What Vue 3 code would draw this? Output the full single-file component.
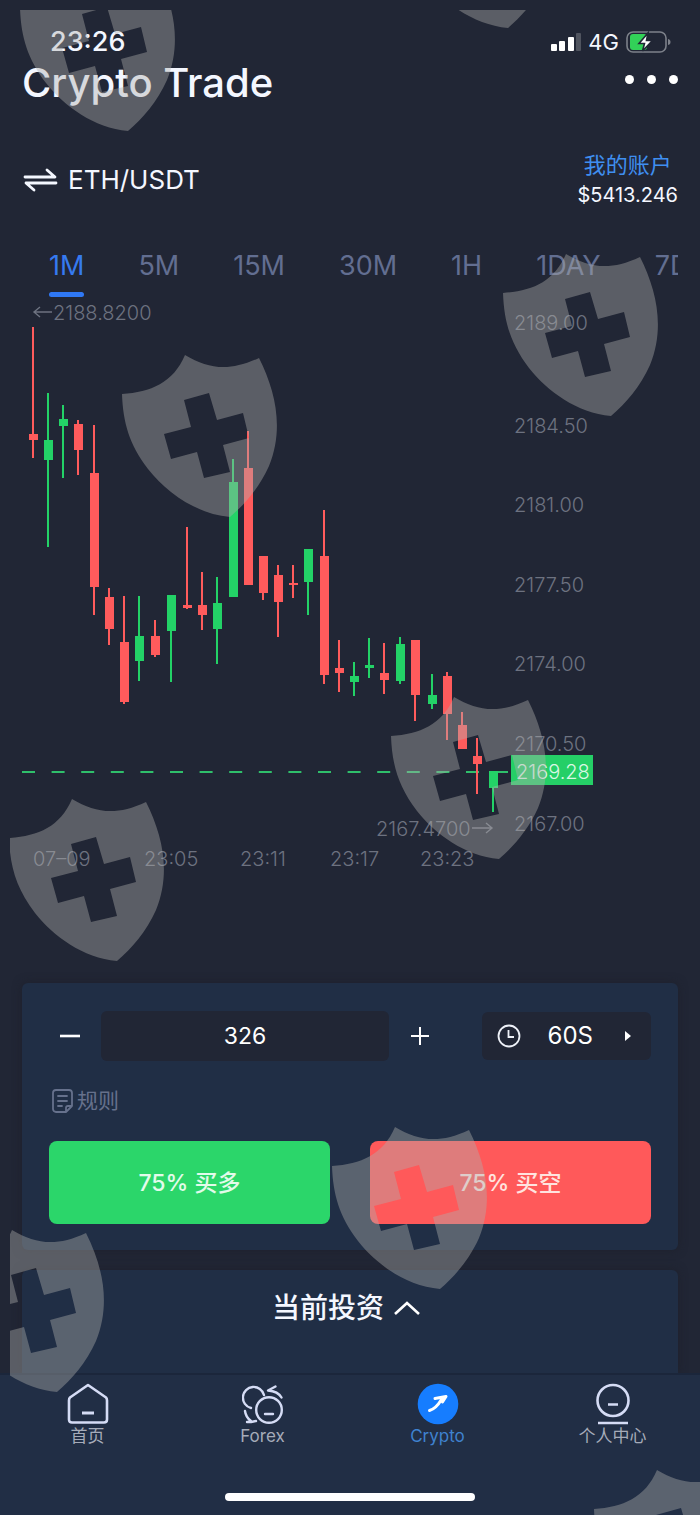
<script setup>
import { ref } from 'vue'

const periods = ['1M', '5M', '15M', '30M', '1H', '1DAY', '7DAY']
const period = ref('1M')
const amount = ref(326)
const duration = ref('60S')

// x, high, body top, body bottom, low, direction
const candles = [
  [33, 327, 434, 440, 458, 'down'],
  [48, 393, 440, 460, 547, 'up'],
  [63, 405, 419, 426, 478, 'up'],
  [78, 420, 424, 450, 475, 'down'],
  [94, 425, 473, 587, 615, 'down'],
  [109, 588, 597, 629, 645, 'down'],
  [124, 596, 642, 702, 704, 'down'],
  [139, 596, 636, 661, 681, 'up'],
  [155, 620, 636, 655, 657, 'down'],
  [171, 595, 595, 631, 682, 'up'],
  [187, 527, 605, 608, 609, 'down'],
  [202, 572, 605, 615, 630, 'down'],
  [217, 577, 603, 629, 664, 'up'],
  [233, 459, 482, 597, 597, 'up'],
  [248, 431, 468, 585, 585, 'down'],
  [263, 556, 556, 593, 600, 'down'],
  [278, 565, 575, 602, 637, 'down'],
  [293, 565, 583, 585, 598, 'down'],
  [308, 549, 549, 582, 615, 'up'],
  [324, 510, 556, 675, 684, 'down'],
  [339, 640, 668, 673, 692, 'down'],
  [354, 662, 676, 682, 696, 'up'],
  [369, 638, 665, 668, 678, 'up'],
  [384, 643, 673, 680, 694, 'down'],
  [400, 637, 644, 681, 684, 'up'],
  [415, 640, 640, 695, 721, 'down'],
  [432, 674, 695, 704, 709, 'up'],
  [447, 672, 676, 714, 740, 'down'],
  [462, 712, 725, 749, 749, 'down'],
  [477, 738, 756, 764, 794, 'down'],
  [493, 771, 771, 788, 812, 'up'],
]
const prices = [
  ['2189.00', 330], ['2184.50', 433], ['2181.00', 512], ['2177.50', 592],
  ['2174.00', 671], ['2170.50', 751], ['2167.00', 831],
]
const times = [
  ['07–09', 33], ['23:05', 144], ['23:11', 240], ['23:17', 330], ['23:23', 420],
]
const shields = [
  [19, -32], [399, -135], [502, 253], [121, 354], [390, 696],
  [8, 798], [331, 1126], [-52, 1229], [593, 1469],
]
</script>

<template>
  <div class="page">
    <div class="status">
      <span class="clock">23:26</span>
      <span class="signals">
        <svg width="30" height="18" viewBox="0 0 30 18" aria-hidden="true">
          <rect x="0" y="11" width="6" height="7" rx="1" fill="#fff" />
          <rect x="8" y="8" width="6" height="10" rx="1" fill="#fff" />
          <rect x="17" y="4" width="6" height="14" rx="1" fill="#fff" />
          <rect x="25" y="0" width="5" height="18" rx="1" fill="#50545f" />
        </svg>
        <span class="net">4G</span>
        <svg width="46" height="24" viewBox="0 0 46 24" aria-hidden="true">
          <rect x="1" y="2" width="39" height="20" rx="6" fill="none" stroke="#7d818a" stroke-width="1.6" />
          <rect x="4" y="4" width="17" height="16" rx="3" fill="#32d158" />
          <path d="M42 9c2 .5 2.500 1.500 2.500 3s-.5 2.500-2.500 3z" fill="#7d818a" />
          <path d="M22 3 13 13.500h5.500L16.500 21 26.500 10.500h-6z" fill="#fff" stroke="#212635" stroke-width="1.600" />
        </svg>
      </span>
    </div>

    <header class="top">
      <h1>Crypto Trade</h1>
      <button class="more" type="button" aria-label="More"><i></i><i></i><i></i></button>
    </header>

    <section class="pair-row">
      <button class="pair" type="button">
        <svg width="36" height="26" viewBox="0 0 36 26" fill="none" stroke="#f4f7ff" stroke-width="2.800" stroke-linecap="round" stroke-linejoin="round" aria-hidden="true">
          <path d="M3 10h30L25 3M34 16H4l8 7" />
        </svg>
        <span>ETH/USDT</span>
      </button>
      <div class="account">
        <a href="#account">我的账户</a>
        <span>$5413.246</span>
      </div>
    </section>

    <nav class="periods">
      <button
        v-for="p in periods" :key="p" type="button"
        :class="{ on: p === period }" @click="period = p"
      >{{ p }}</button>
    </nav>

    <svg class="chart" viewBox="22 298 656 582" role="img" aria-label="ETH/USDT">
      <line x1="22" y1="772" x2="508" y2="772" class="last-line" />
      <g v-for="c in candles" :key="c[0]" :class="c[5]">
        <rect :x="c[0] - 1" :y="c[1]" width="2" :height="c[4] - c[1]" />
        <rect :x="c[0] - 4" :y="c[2]" width="9" :height="c[3] - c[2]" />
      </g>
      <text v-for="p in prices" :key="p[0]" x="514" :y="p[1]">{{ p[0] }}</text>
      <text v-for="t in times" :key="t[0]" :x="t[1]" y="866">{{ t[0] }}</text>
      <text x="53" y="320">2188.8200</text>
      <text x="376" y="836">2167.4700</text>
      <path class="arrow" d="M40 307l-6 5 6 5M34 312h18M486 823l6 5-6 5M492 828h-20" />
      <rect x="511" y="755" width="82" height="30" class="tag" />
      <text x="516" y="779" class="tag-text">2169.28</text>
    </svg>

    <section class="card order">
      <div class="controls">
        <button class="step" type="button" aria-label="Decrease" @click="amount--">
          <svg width="20" height="20" viewBox="0 0 20 20"><path d="M0 10h20" stroke="#fff" stroke-width="2.600" /></svg>
        </button>
        <input v-model="amount" class="amount" type="text" inputmode="numeric" aria-label="Amount" />
        <button class="step plus" type="button" aria-label="Increase" @click="amount++">
          <svg width="20" height="20" viewBox="0 0 20 20"><path d="M1 10h18M10 1v18" stroke="#fff" stroke-width="2" /></svg>
        </button>
        <label class="duration">
          <svg width="24" height="24" viewBox="0 0 24 24" fill="none" stroke="#eef1f8" stroke-width="1.800" aria-hidden="true">
            <circle cx="12" cy="12" r="10.500" /><path d="M11.500 6v7H17" />
          </svg>
          <select v-model="duration" aria-label="Duration"><option>60S</option></select>
          <svg width="8" height="12" viewBox="0 0 8 12" aria-hidden="true"><path d="M1 1v10l6-5z" fill="#fff" /></svg>
        </label>
      </div>

      <a class="rules" href="#rules">
        <svg width="21" height="24" viewBox="0 0 21 24" fill="none" stroke="#66718c" stroke-width="1.800" stroke-linecap="round" stroke-linejoin="round" aria-hidden="true">
          <path d="M14 23H4a3 3 0 0 1-3-3V4a3 3 0 0 1 3-3h13a3 3 0 0 1 3 3v13zM14 23v-4a2 2 0 0 1 2-2h4M6 7h9M6 12h9M6 17h4" />
        </svg>
        <span>规则</span>
      </a>

      <div class="actions">
        <button class="buy" type="button">75% 买多</button>
        <button class="sell" type="button">75% 买空</button>
      </div>
    </section>

    <section class="card invest">
      <button type="button">
        <span>当前投资</span>
        <svg width="26" height="16" viewBox="0 0 26 16" fill="none" stroke="#fff" stroke-width="2.600" aria-hidden="true"><path d="M1 14 13 3l12 11" /></svg>
      </button>
    </section>

    <footer class="tabbar">
      <nav>
        <a href="#home">
          <svg width="42" height="42" viewBox="0 0 42 42" fill="none" stroke="#d5dcf5" stroke-width="2.600" stroke-linejoin="round" aria-hidden="true">
            <path d="M21 2 39 14.500q1 1 1 3v19q0 3-3 3H5q-3 0-3-3V17.500q0-2 1-3z" /><path d="M15 30h12" stroke-width="3" />
          </svg>
          <span>首页</span>
        </a>
        <a href="#forex">
          <svg width="42" height="42" viewBox="0 0 42 42" fill="none" stroke="#d5dcf5" stroke-width="2.400" stroke-linecap="round" stroke-linejoin="round" aria-hidden="true">
            <circle cx="27" cy="27" r="12.800" />
            <path d="M23 31h8" />
            <path d="M22 12A10.700 10.700 0 1 0 9 25" />
            <path d="M33.500 3.500 26 7.500C32 8 37 10 39.500 14.500" />
            <path d="M3 28C3.500 32 5.500 35.500 9 38M5 39h4l5-1" />
          </svg>
          <span>Forex</span>
        </a>
        <a href="#crypto" class="current">
          <svg width="42" height="42" viewBox="0 0 42 42" aria-hidden="true">
            <circle cx="21" cy="21" r="20.300" fill="#167dff" />
            <path d="M12.500 27.500C18 26 21.500 21.500 24.500 16.500M18 15.500 29 13.500 25.500 19" fill="none" stroke="#fff" stroke-width="3" stroke-linecap="round" stroke-linejoin="round" />
          </svg>
          <span>Crypto</span>
        </a>
        <a href="#me">
          <svg width="42" height="42" viewBox="0 0 42 42" fill="none" stroke="#d5dcf5" stroke-width="2.600" aria-hidden="true">
            <circle cx="21" cy="17.500" r="15.500" /><path d="M16 21.500h10M6 40h30" />
          </svg>
          <span>个人中心</span>
        </a>
      </nav>
      <div class="home-bar"></div>
    </footer>

    <div class="marks" aria-hidden="true">
      <svg width="100%" height="100%">
        <g v-for="(s, i) in shields" :key="i" :transform="`translate(${s[0] - 10} ${s[1] - 10})`">
          <path
            fill-rule="evenodd"
            d="M1 40C30 38 52 29 64 1C88 15 108 18 138 4C155 38 163 75 148 112C138 134 124 150 109 163C75 160 45 138 27 115C8 90 2 68 1 40ZM63 46 88 39 96 66 122 59 128 84 102 91 109 118 83 124 76 98 50 105 43 80 70 73Z"
          />
        </g>
      </svg>
    </div>
  </div>
</template>

<style>
body {
  margin: 0;
  background: #212635;
}
</style>

<style scoped>
.page {
  position: relative;
  display: flex;
  flex-direction: column;
  min-height: 100vh;
  box-sizing: border-box;
  overflow: hidden;
  background: #212635;
  color: #f4f7ff;
  font-family: Inter, "Noto Sans CJK SC", sans-serif;
}
button {
  padding: 0;
  border: 0;
  background: none;
  color: inherit;
  font: inherit;
  cursor: pointer;
}
a {
  color: inherit;
  text-decoration: none;
}
svg {
  display: block;
  flex: none;
}
.status {
  display: flex;
  justify-content: space-between;
  align-items: center;
  padding: 26px 28px 0 50px;
}
.clock {
  font-size: 27px;
  line-height: 32px;
  font-weight: 500;
}
.signals {
  display: flex;
  align-items: center;
  gap: 7px;
}
.net {
  font-size: 22px;
  line-height: 32px;
}
.top {
  display: flex;
  justify-content: space-between;
  align-items: center;
  padding: 0 22px;
}
h1 {
  margin: 0;
  font-size: 40px;
  line-height: 50px;
  font-weight: 500;
}
.more {
  display: flex;
  gap: 13px;
  padding-bottom: 8px;
}
.more i {
  width: 9px;
  height: 9px;
  border-radius: 50%;
  background: #fff;
}
.pair-row {
  display: flex;
  justify-content: space-between;
  align-items: center;
  padding: 42px 22px 0;
}
.pair {
  display: flex;
  align-items: center;
  gap: 10px;
  font-size: 26px;
  line-height: 32px;
}
.account {
  display: flex;
  flex-direction: column;
  align-items: center;
  font-size: 20px;
  line-height: 30px;
}
.account a {
  color: #3f8ff0;
  font-size: 22px;
}
.periods {
  display: flex;
  margin: 38px 22px 0;
  overflow: hidden;
}
.periods button {
  position: relative;
  flex: none;
  height: 50px;
  padding: 0 27px 15px;
  color: #626e91;
  font-size: 27px;
  line-height: 35px;
}
.periods button.on {
  color: #367af0;
}
.periods button.on::after {
  content: "";
  position: absolute;
  right: 27px;
  bottom: 1px;
  left: 27px;
  height: 5px;
  border-radius: 3px;
  background: #2f78f5;
}
.chart {
  width: auto;
  margin: 0 22px;
  font-size: 20px;
  font-weight: 300;
}
.chart text {
  fill: #6d7280;
}
.chart .tag-text {
  fill: #d9f7e4;
}
.up {
  fill: #23d267;
}
.down {
  fill: #ff5b5c;
}
.tag {
  fill: #25cf67;
}
.arrow {
  fill: none;
  stroke: #6d7280;
  stroke-width: 1.4;
}
.last-line {
  stroke: #2fbf6b;
  stroke-width: 2;
  stroke-dasharray: 13 16.6;
}
.card {
  margin: 0 22px;
  border-radius: 6px;
  background: #202e45;
  box-shadow: 0 0 10px rgba(28, 30, 40, 0.7);
}
.order {
  margin-top: 103px;
  padding: 28px 27px 26px;
}
.controls {
  display: flex;
  align-items: center;
}
.step {
  display: flex;
  justify-content: center;
  width: 42px;
  margin-right: 10px;
}
.plus {
  width: 62px;
  margin-right: 31px;
}
.amount {
  flex: 1;
  min-width: 0;
  height: 50px;
  box-sizing: border-box;
  padding: 0;
  border: 0;
  border-radius: 6px;
  background: #212635;
  color: #fff;
  font: 400 23px/28px Inter, sans-serif;
  text-align: center;
}
.duration {
  display: flex;
  align-items: center;
  justify-content: space-between;
  width: 169px;
  height: 48px;
  box-sizing: border-box;
  padding: 0 19px 0 15px;
  border-radius: 6px;
  background: #212635;
}
.duration select {
  width: 50px;
  padding: 0;
  border: 0;
  background: none;
  color: #fff;
  appearance: none;
  font: 400 24px/28px Inter, sans-serif;
}
.rules {
  display: inline-flex;
  align-items: center;
  gap: 4px;
  margin: 25px 0 25px 3px;
  color: #66718c;
  font-size: 21px;
  line-height: 30px;
}
.actions {
  display: flex;
  gap: 40px;
}
.actions button {
  flex: 1;
  height: 83px;
  border-radius: 8px;
  color: #e2fbea;
  font-size: 23px;
  line-height: 32px;
  font-weight: 500;
}
.actions .buy {
  background: #2bd66a;
}
.actions .sell {
  background: #ff595a;
  color: #ffe3df;
}
.invest {
  flex: 1;
  min-height: 102px;
  margin-top: 20px;
  border-radius: 6px 6px 0 0;
}
.invest button {
  display: flex;
  align-items: center;
  justify-content: center;
  gap: 10px;
  width: 100%;
  padding: 18px 8px 0 0;
  font-size: 28px;
  line-height: 40px;
  font-weight: 500;
}
.tabbar {
  position: relative;
  padding: 8px 0 14px;
  border-top: 2px solid #1b263b;
  background: #212e45;
}
.tabbar nav {
  display: flex;
}
.tabbar a {
  display: flex;
  flex: 1;
  flex-direction: column;
  align-items: center;
  color: #a5abb9;
  font-size: 17px;
  line-height: 22px;
}
.tabbar a.current {
  color: #3f82cf;
}
.home-bar {
  width: 250px;
  height: 8px;
  margin: 46px auto 0;
  border-radius: 4px;
  background: #fff;
}
.marks {
  position: absolute;
  inset: 10px 0 0 10px;
  overflow: hidden;
  pointer-events: none;
  fill: rgba(176, 175, 172, 0.41);
}
</style>
